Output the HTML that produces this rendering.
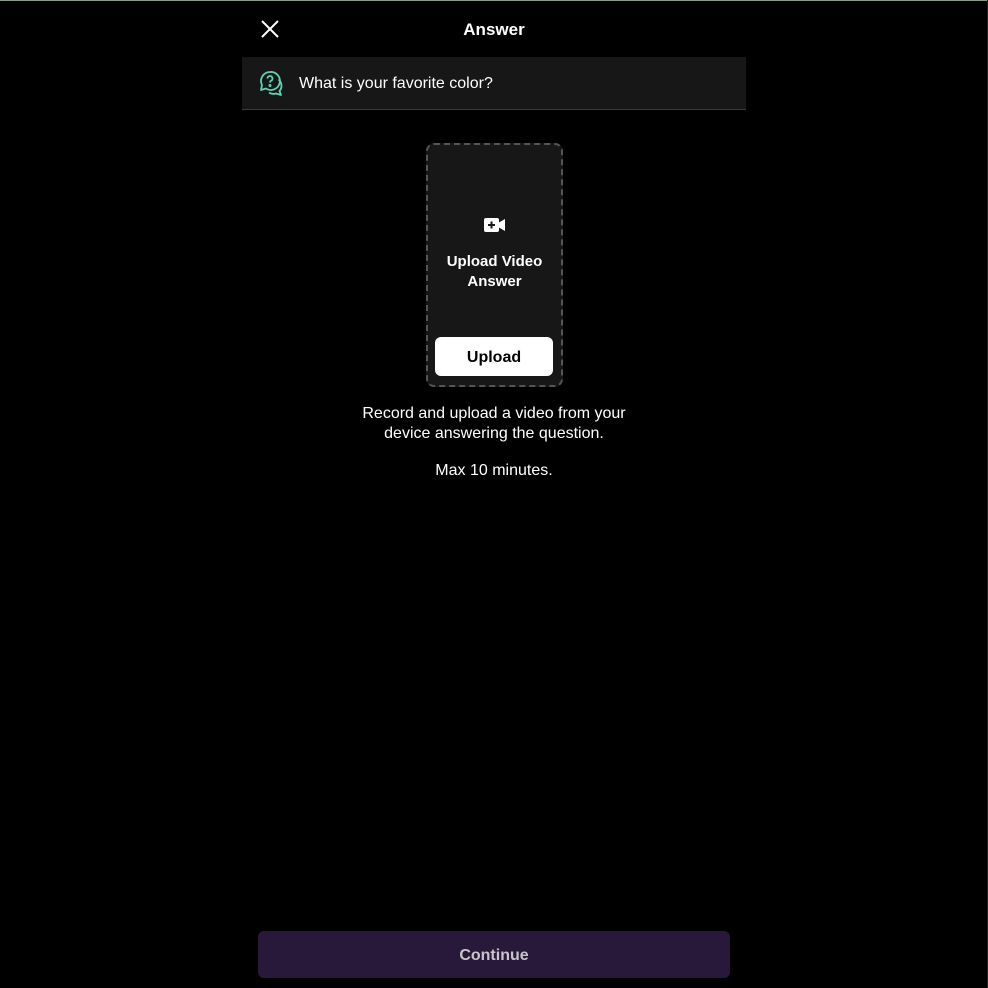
<!DOCTYPE html>
<html><head><style>
body{margin:0;width:988px;height:988px;background:#000;position:relative;overflow:hidden;font-family:"Liberation Sans",sans-serif;color:#fff}
.t{position:absolute;left:0;top:0;width:988px;height:1px;background:#8a9a88}
.r{position:absolute;right:0;top:0;width:1px;height:988px;background:#222}
.ttl{position:absolute;left:242px;width:504px;top:20px;text-align:center;font-weight:bold;font-size:17px}
.q{position:absolute;left:242px;top:57px;width:504px;height:52px;background:#171717;border-bottom:1px solid #3a3a3a}
.q span{position:absolute;left:57px;top:18px;font-size:16px}
.card{position:absolute;left:426px;top:143px;width:133px;height:240px;background:#171717;border:2px dashed #555;border-radius:8px}
.lab{position:absolute;left:0;width:133px;top:107px;text-align:center;font-weight:bold;font-size:15px;line-height:20px}
.btn{position:absolute;left:7px;top:192px;width:118px;height:39px;background:#fff;border-radius:6px;color:#000;font-weight:bold;font-size:16px;text-align:center;line-height:41px}
.d{position:absolute;left:242px;width:504px;text-align:center;font-size:16px;line-height:20px}
.c{position:absolute;left:258px;top:931px;width:472px;height:47px;background:#28193a;border-radius:6px;color:#c8c4cc;font-weight:bold;font-size:16px;text-align:center;line-height:49px}
</style></head><body>
<div class="t"></div><div class="r"></div>
<svg style="position:absolute;left:261px;top:20px" width="18" height="18" viewBox="0 0 18 18"><path d="M1 1L17 17M17 1L1 17" stroke="#fff" stroke-width="2"/></svg>
<div class="ttl">Answer</div>
<div class="q">
<svg style="position:absolute;left:17px;top:13px" width="27" height="27" viewBox="0 0 27 27" fill="none" stroke="#5fd0b0" stroke-width="1.8" stroke-linejoin="round"><path d="M11 2a9 9 0 0 0-8 13l-1 5 5-1.5A9 9 0 1 0 11 2z"/><path d="M19.5 9.5a8 8 0 0 1 1 11.5l1.5 4-5-1.5a8 8 0 0 1-7-1"/><path d="M8.5 8.5a2.5 2.5 0 1 1 3.5 2.3c-.8.4-1 1-1 1.7"/><circle cx="11" cy="15.5" r=".6" fill="#5fd0b0"/></svg>
<span>What is your favorite color?</span></div>
<div class="card">
<svg style="position:absolute;left:56px;top:73px" width="22" height="14" viewBox="0 0 22 14"><rect x="0" y="0" width="15" height="14" rx="2" fill="#fff"/><path d="M14 5L21 1V13L14 9Z" fill="#fff"/><path d="M7.5 3.5V10.5M4 7H11" stroke="#171717" stroke-width="2"/></svg>
<div class="lab">Upload Video<br>Answer</div>
<div class="btn">Upload</div></div>
<div class="d" style="top:404px">Record and upload a video from your<br>device answering the question.</div>
<div class="d" style="top:461px">Max 10 minutes.</div>
<div class="c">Continue</div>
</body></html>
